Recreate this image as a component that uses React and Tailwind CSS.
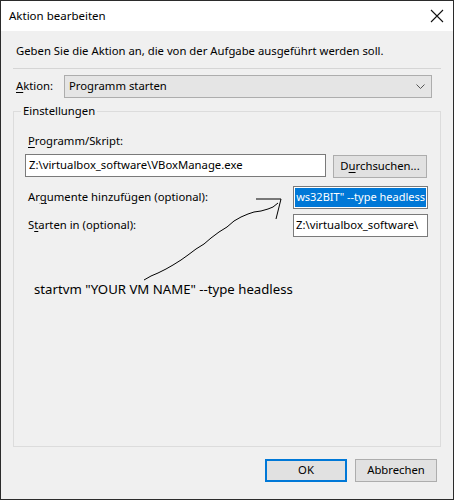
import React from "react";

const font = { fontFamily: '"Noto Sans", "Liberation Sans", sans-serif' };

const U = ({ children }) => <span className="underline underline-offset-2">{children}</span>;

const Arrow = () => (
  <svg className="absolute left-0 top-0 pointer-events-none" width="454" height="500" viewBox="0 0 454 500">
    <path
      d="M143 279 L150 275 L157 272 L165 268 L172 264 L180 259 L187 254 L195 248 L203 243 L210 237 L218 231 L226 226 L233 220 L240 216 L247 213 L253 211 L260 210 L267 208 L272 206 L277 202"
      fill="none"
      stroke="#000"
      strokeWidth="1"
    />
    <path d="M255 198 L280 198 L275 218" fill="none" stroke="#000" strokeWidth="1" />
  </svg>
);

export default function App() {
  return (
    <div
      className="relative w-[454px] h-[500px] border border-[#2b2b2b] flex flex-col text-[11.3px] text-black bg-[#f0f0f0]"
      style={font}
    >
      {/* title bar */}
      <div className="h-[30px] bg-white flex items-center justify-between pl-[8px] pr-[9px]">
        <span className="text-[11.5px]">Aktion bearbeiten</span>
        <svg width="14" height="14" viewBox="0 0 14 14">
          <path d="M1 1 L13 13 M13 1 L1 13" stroke="#111" strokeWidth="1.1" />
        </svg>
      </div>

      <div className="flex-1 flex flex-col">
        <p className="mt-[12px] pl-[15px] leading-[16px]">
          Geben Sie die Aktion an, die von der Aufgabe ausgeführt werden soll.
        </p>
        <div className="mt-[9px] mx-[12px] border-t border-[#d5d5d5]" />

        <div className="mt-[6px] flex items-center pl-[15px] h-[23px]">
          <span className="w-[48px]"><U>A</U>ktion:</span>
          <div className="w-[368px] h-[23px] bg-[#e5e5e5] border border-[#adadad] flex items-center justify-between pl-[4px] pr-[6px]">
            <span>Programm starten</span>
            <svg width="9" height="6" viewBox="0 0 9 6">
              <path d="M0.5 0.5 L4.5 4.5 L8.5 0.5" fill="none" stroke="#555" strokeWidth="1" />
            </svg>
          </div>
        </div>

        <fieldset className="mt-[5px] mx-[12px] h-[344px] border border-[#dcdcdc] flex flex-col">
          <legend className="ml-[7px] px-[2px] leading-[16px]">Einstellungen</legend>

          <div className="mt-[14px] pl-[14px] leading-[16px]">
            <U>P</U>rogramm/Skript:
          </div>
          <div className="mt-[5px] flex items-start pl-[11px]">
            <div className="w-[301px] h-[23px] bg-white border border-[#7a7a7a] flex items-center pl-[3px]">
              Z:\virtualbox_software\VBoxManage.exe
            </div>
            <div className="ml-[7px] mt-[1px] w-[94px] h-[23px] bg-[#e1e1e1] border border-[#adadad] flex items-center justify-center">
              D<U>u</U>rchsuchen...
            </div>
          </div>

          <div className="mt-[8px] flex items-center pl-[14px] h-[23px]">
            <span className="w-[265px]">Ar<U>g</U>umente hinzufügen (optional):</span>
            <div className="w-[135px] h-[23px] bg-white border border-[#7a7a7a] flex items-center px-[1px] overflow-hidden">
              <div className="bg-[#0078d7] text-white text-[11px] w-full h-[19px] flex items-center justify-end pr-[1px] overflow-hidden whitespace-nowrap">
                <span>ws32BIT" --type headless</span>
              </div>
            </div>
          </div>

          <div className="mt-[5px] flex items-center pl-[14px] h-[23px]">
            <span className="w-[265px]">S<U>t</U>arten in (optional):</span>
            <div className="w-[135px] h-[23px] bg-white border border-[#7a7a7a] flex items-center pl-[2px] whitespace-nowrap overflow-hidden">
              Z:\virtualbox_software\
            </div>
          </div>

          <div className="mt-[43px] pl-[20px] text-[13.2px] leading-[18px]">
            startvm "YOUR VM NAME" --type headless
          </div>
        </fieldset>

        <div className="mt-[12px] flex justify-end gap-[8px] pr-[16px]">
          <div className="w-[82px] h-[23px] bg-[#e1e1e1] border-2 border-[#0078d7] flex items-center justify-center">
            OK
          </div>
          <div className="w-[82px] h-[23px] bg-[#e1e1e1] border border-[#adadad] flex items-center justify-center">
            Abbrechen
          </div>
        </div>
      </div>

      <Arrow />
    </div>
  );
}
